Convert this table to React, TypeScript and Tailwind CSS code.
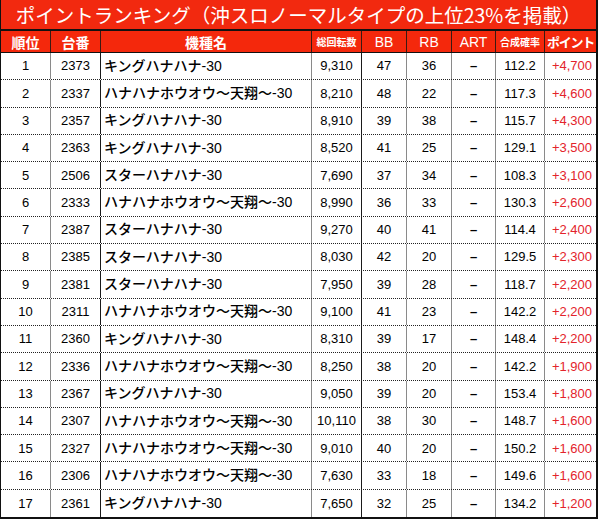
import React from "react";

type Row = [number, string, string, string, number, number, string, string];

const rows: Row[] = [
  [1, "2373", "キングハナハナ-30", "9,310", 47, 36, "112.2", "+4,700"],
  [2, "2337", "ハナハナホウオウ～天翔～-30", "8,210", 48, 22, "117.3", "+4,600"],
  [3, "2357", "キングハナハナ-30", "8,910", 39, 38, "115.7", "+4,300"],
  [4, "2363", "キングハナハナ-30", "8,520", 41, 25, "129.1", "+3,500"],
  [5, "2506", "スターハナハナ-30", "7,690", 37, 34, "108.3", "+3,100"],
  [6, "2333", "ハナハナホウオウ～天翔～-30", "8,990", 36, 33, "130.3", "+2,600"],
  [7, "2387", "スターハナハナ-30", "9,270", 40, 41, "114.4", "+2,400"],
  [8, "2385", "スターハナハナ-30", "8,030", 42, 20, "129.5", "+2,300"],
  [9, "2381", "スターハナハナ-30", "7,950", 39, 28, "118.7", "+2,200"],
  [10, "2311", "ハナハナホウオウ～天翔～-30", "9,100", 41, 23, "142.2", "+2,200"],
  [11, "2360", "キングハナハナ-30", "8,310", 39, 17, "148.4", "+2,200"],
  [12, "2336", "ハナハナホウオウ～天翔～-30", "8,250", 38, 20, "142.2", "+1,900"],
  [13, "2367", "キングハナハナ-30", "9,050", 39, 20, "153.4", "+1,800"],
  [14, "2307", "ハナハナホウオウ～天翔～-30", "10,110", 38, 30, "148.7", "+1,600"],
  [15, "2327", "ハナハナホウオウ～天翔～-30", "9,010", 40, 20, "150.2", "+1,600"],
  [16, "2306", "ハナハナホウオウ～天翔～-30", "7,630", 33, 18, "149.6", "+1,600"],
  [17, "2361", "キングハナハナ-30", "7,650", 32, 25, "134.2", "+1,200"],
];

const cols = "grid grid-cols-[50px_50px_211px_50px_45px_45px_44px_49px_51px]";
const font = "font-['Liberation_Sans','Noto_Sans_CJK_JP',sans-serif]";
const jp = "font-['Noto_Sans_CJK_JP',sans-serif] font-bold";

const gray = "border-r border-[#8a8a8a]";
const dark = "border-r border-[#1a1a1a]";
const hcell = "border-r border-[#3a1a12] flex items-center justify-center overflow-hidden whitespace-nowrap";

export default function App() {
  return (
    <div className={`w-[598px] bg-white ${font}`}>
      <div className="border-l border-r-2 border-b-2 border-[#111]">
        {/* title */}
        <div className="h-[31px] bg-[#f2290f] border-b-2 border-[#111] flex items-center justify-center text-white text-[19.5px] leading-none font-['Noto_Sans_CJK_JP',sans-serif] pt-[1px]">
          ポイントランキング（沖スロノーマルタイプの上位23%を掲載）
        </div>

        {/* header */}
        <div className={`${cols} h-[22px] bg-[#f4280c] border-b border-[#111] text-white leading-none`}>
          <div className={`${hcell} ${jp} text-[14px]`}>順位</div>
          <div className={`${hcell} ${jp} text-[14px]`}>台番</div>
          <div className={`${hcell} ${jp} text-[14px]`}>機種名</div>
          <div className={`${hcell} ${jp} text-[10px]`}>総回転数</div>
          <div className={`${hcell} text-[14px]`}>BB</div>
          <div className={`${hcell} text-[14px]`}>RB</div>
          <div className={`${hcell} text-[14px]`}>ART</div>
          <div className={`${hcell} ${jp} text-[10px]`}>合成確率</div>
          <div className={`flex items-center justify-center whitespace-nowrap ${jp} text-[13px] tracking-[-1.2px]`}>ポイント</div>
        </div>

        {/* rows */}
        {rows.map((r, i) => (
          <div
            key={r[0]}
            className={`${cols} h-[27.3px] text-[13px] text-black ${
              i < rows.length - 1 ? "border-b border-dotted border-[#222]" : ""
            }`}
          >
            <div className={`${gray} flex items-center justify-center`}>{r[0]}</div>
            <div className={`${dark} flex items-center justify-center`}>{r[1]}</div>
            <div className={`${gray} flex items-center pl-[3px] text-[14px] font-medium whitespace-nowrap`}>{r[2]}</div>
            <div className={`${dark} flex items-center justify-center`}>{r[3]}</div>
            <div className={`${gray} flex items-center justify-center`}>{r[4]}</div>
            <div className={`${gray} flex items-center justify-center`}>{r[5]}</div>
            <div className={`${gray} flex items-center justify-center font-bold`}>–</div>
            <div className={`${gray} flex items-center justify-center`}>{r[6]}</div>
            <div className="flex items-center justify-end pr-[4px] text-[#e3232b]">{r[7]}</div>
          </div>
        ))}
      </div>
    </div>
  );
}
